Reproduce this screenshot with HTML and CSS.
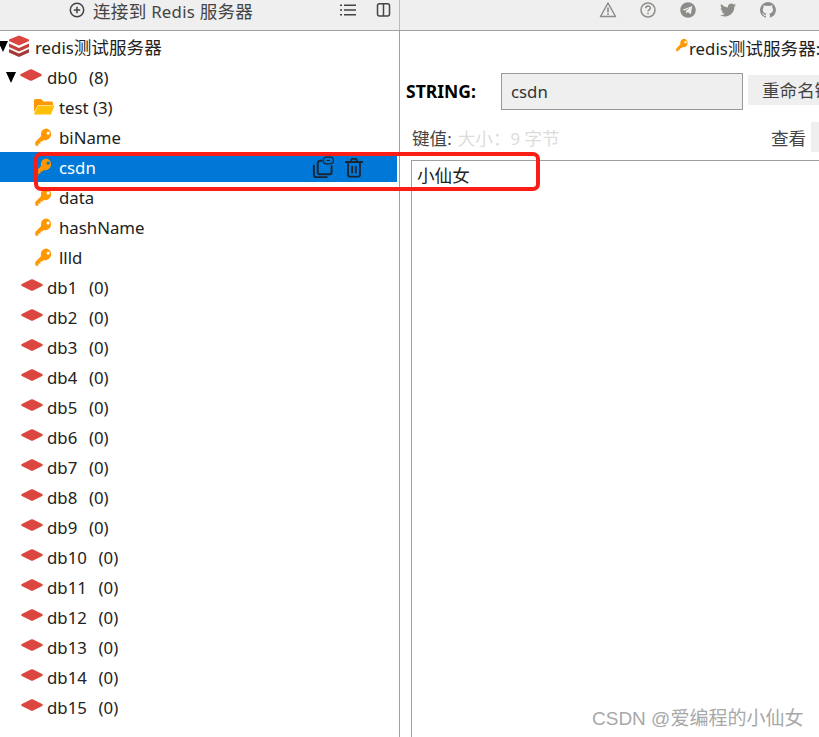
FILE: index.html
```html
<!DOCTYPE html>
<html lang="zh">
<head>
<meta charset="utf-8">
<title>Redis</title>
<link rel="stylesheet" href="styles.css">
</head>
<body>
<svg class="defs" width="0" height="0">
  <defs>
    <symbol id="key" viewBox="0 0 20 20">
      <path fill="#ff9800" d="M13 .5a6.500 6.500 0 0 0-6.200 8.500L.6 15.200a1 1 0 0 0-.3.700v2.800a1 1 0 0 0 1 1h2.400v-2.400h2.400v-2.400h2l1.600-1.600A6.500 6.500 0 1 0 13 .5zm1.600 3.300a1.800 1.800 0 1 1 0 3.600 1.800 1.800 0 0 1 0-3.600z"/>
    </symbol>
    <symbol id="db" viewBox="0 0 22 12">
      <path fill="#dc4640" d="M9.800.5a3 3 0 0 1 2.400 0l9 4.500q1.200.9 0 1.900l-9 4.600a3 3 0 0 1-2.400 0L.8 6.900q-1.200-1 0-1.900z"/>
    </symbol>
  </defs>
</svg>
<div class="app">
  <header class="topbar">
    <div class="top-left">
      <button class="connect">
        <svg class="ico16" viewBox="0 0 16 16"><circle cx="8" cy="8" r="6.700" fill="none" stroke="#444" stroke-width="1.500"/><path d="M8 4.800v6.400M4.800 8h6.400" stroke="#444" stroke-width="1.500"/></svg>
        <span><span class="zh">连接到</span> Redis <span class="zh">服务器</span></span>
      </button>
      <span class="top-tool list-tool">
        <svg class="ico16" viewBox="0 0 16 16"><path d="M0 3.200h2M0 8h2M0 12.800h2M4 3.200h12M4 8h12M4 12.800h12" stroke="#444" stroke-width="1.500"/></svg>
      </span>
      <span class="top-tool">
        <svg class="ico16" viewBox="0 0 16 16"><rect x="1.500" y="1.700" width="12" height="12.300" rx="2" fill="none" stroke="#444" stroke-width="1.500"/><path d="M7.500 2v12" stroke="#444" stroke-width="1.500"/></svg>
      </span>
    </div>
    <div class="top-right">
      <svg class="ico-top" viewBox="0 0 18 18"><path d="M9 2 1.500 15.500h15z" fill="none" stroke="#8c8c88" stroke-width="1.500" stroke-linejoin="round"/><path d="M9 6.500v5M9 12.500v1.500" stroke="#8c8c88" stroke-width="1.700"/></svg>
      <svg class="ico-top" viewBox="0 0 18 18"><circle cx="9" cy="9" r="7" fill="none" stroke="#8c8c88" stroke-width="1.500"/><path d="M6.800 7.300c0-3 4.500-3 4.500-.2 0 1.700-2.300 1.700-2.300 3.400M9 11.700v1.500" fill="none" stroke="#8c8c88" stroke-width="1.500"/></svg>
      <svg class="ico-top" viewBox="0 0 18 18"><circle cx="9" cy="9" r="7.800" fill="#8c8c88"/><path d="M3.500 8.800 13.300 5l-1.500 8.300-3-2.200-1.500 1.500-.4-2.700 4.300-3.600-5.300 3.200z" fill="#efefef"/></svg>
      <svg class="ico-top" viewBox="0 0 18 18"><path fill="#8c8c88" d="M17 4c-.6.300-1.200.4-1.900.5.700-.4 1.200-1 1.400-1.800-.6.400-1.300.6-2 .8a3.300 3.300 0 0 0-5.600 3C6.200 6.400 3.800 5.100 2.200 3.100c-.9 1.500-.4 3.400 1 4.400-.5 0-1-.2-1.500-.4 0 1.600 1.100 3 2.600 3.300-.5.100-1 .1-1.500 0 .4 1.300 1.600 2.200 3.100 2.300A6.600 6.600 0 0 1 1 14c1.500.9 3.200 1.500 5 1.500 6.100 0 9.500-5.100 9.300-9.700.7-.4 1.200-1.100 1.700-1.800z"/></svg>
      <svg class="ico-top" viewBox="0 0 18 18"><path fill="#8c8c88" d="M9 1a8 8 0 0 0-2.500 15.600c.4.100.5-.2.500-.4v-1.400c-2.200.5-2.700-1-2.700-1-.4-.9-.9-1.200-.9-1.200-.7-.5.100-.5.100-.5.800.1 1.200.8 1.200.8.700 1.200 1.900.9 2.300.7.100-.5.300-.9.500-1.100-1.800-.2-3.700-.9-3.700-4 0-.9.300-1.600.8-2.100-.1-.2-.4-1 .1-2.100 0 0 .7-.2 2.200.8a7.600 7.600 0 0 1 4 0c1.500-1 2.200-.8 2.200-.8.500 1.100.2 1.900.1 2.100.5.500.8 1.200.8 2.100 0 3.100-1.900 3.800-3.700 4 .3.200.6.700.6 1.500v2.200c0 .2.100.5.500.4A8 8 0 0 0 9 1z"/></svg>
    </div>
  </header>
  <main class="panes">
    <nav class="tree">
      <div class="row server">
        <span class="tri"></span>
        <svg class="stack" viewBox="0 0 22 22"><path fill="#dc4640" d="M11 .5 21 4.500v1.500L11 10.500 1 6V4.500z"/><path fill="#c43f3a" d="M1 8.500 11 13 21 8.500V12L11 16.500 1 12z"/><path fill="#a33a36" d="M1 14 11 18.500 21 14v3.500L11 22 1 17.500z"/></svg>
        <span>redis<span class="zh">测试服务器</span></span>
      </div>
      <div class="row db open"><span class="tri"></span><svg class="db-ico"><use href="#db"/></svg><span class="lbl">db0&nbsp; (8)</span></div>
      <div class="row item"><svg class="folder" viewBox="0 0 22 18"><path fill="#ff9800" d="M1 2.500A1.500 1.500 0 0 1 2.500 1h5.500l2.500 2.500h8A1.500 1.500 0 0 1 20 5v2H5L1 14z"/><path fill="#ffc107" d="M5 7.500h16.500L18 16.500H.8z"/></svg><span>test (3)</span></div>
      <div class="row item"><svg class="key"><use href="#key"/></svg><span>biName</span></div>
      <div class="row item selected">
        <svg class="key"><use href="#key"/></svg><span>csdn</span>
        <span class="row-actions">
          <svg class="act copy" viewBox="0 0 24 24"><path d="M16.500 22H5.500A2.500 2.500 0 0 1 3 19.500V10" fill="none" stroke="#1c2430" stroke-width="2" stroke-linecap="round"/><path d="M7 17V7.500A2.500 2.500 0 0 1 9.500 5H11M21.500 10.500V17a2 2 0 0 1-2 2H9a2 2 0 0 1-2-2" fill="none" stroke="#1c2430" stroke-width="2" stroke-linecap="round"/><rect x="12.700" y="1.200" width="10.800" height="7" rx="3.500" fill="none" stroke="#1c2430" stroke-width="1.400"/><path d="M16.200 4.700h3.800" stroke="#1c2430" stroke-width="1.200"/></svg>
          <svg class="act trash" viewBox="0 0 24 24"><path d="M3 6h18M9 5.500V3.500a1 1 0 0 1 1-1h4a1 1 0 0 1 1 1v2M5.500 6.500V20a2 2 0 0 0 2 2h9a2 2 0 0 0 2-2V6.500M10 11v6.500M14 11v6.500" fill="none" stroke="#1c2430" stroke-width="2" stroke-linecap="round"/></svg>
        </span>
      </div>
      <div class="row item"><svg class="key"><use href="#key"/></svg><span>data</span></div>
      <div class="row item"><svg class="key"><use href="#key"/></svg><span>hashName</span></div>
      <div class="row item"><svg class="key"><use href="#key"/></svg><span>llld</span></div>
      <div class="row db"><svg class="db-ico"><use href="#db"/></svg><span class="lbl">db1&nbsp; (0)</span></div>
      <div class="row db"><svg class="db-ico"><use href="#db"/></svg><span class="lbl">db2&nbsp; (0)</span></div>
      <div class="row db"><svg class="db-ico"><use href="#db"/></svg><span class="lbl">db3&nbsp; (0)</span></div>
      <div class="row db"><svg class="db-ico"><use href="#db"/></svg><span class="lbl">db4&nbsp; (0)</span></div>
      <div class="row db"><svg class="db-ico"><use href="#db"/></svg><span class="lbl">db5&nbsp; (0)</span></div>
      <div class="row db"><svg class="db-ico"><use href="#db"/></svg><span class="lbl">db6&nbsp; (0)</span></div>
      <div class="row db"><svg class="db-ico"><use href="#db"/></svg><span class="lbl">db7&nbsp; (0)</span></div>
      <div class="row db"><svg class="db-ico"><use href="#db"/></svg><span class="lbl">db8&nbsp; (0)</span></div>
      <div class="row db"><svg class="db-ico"><use href="#db"/></svg><span class="lbl">db9&nbsp; (0)</span></div>
      <div class="row db"><svg class="db-ico"><use href="#db"/></svg><span class="lbl">db10&nbsp; (0)</span></div>
      <div class="row db"><svg class="db-ico"><use href="#db"/></svg><span class="lbl">db11&nbsp; (0)</span></div>
      <div class="row db"><svg class="db-ico"><use href="#db"/></svg><span class="lbl">db12&nbsp; (0)</span></div>
      <div class="row db"><svg class="db-ico"><use href="#db"/></svg><span class="lbl">db13&nbsp; (0)</span></div>
      <div class="row db"><svg class="db-ico"><use href="#db"/></svg><span class="lbl">db14&nbsp; (0)</span></div>
      <div class="row db"><svg class="db-ico"><use href="#db"/></svg><span class="lbl">db15&nbsp; (0)</span></div>
    </nav>
    <section class="detail">
      <div class="key-title"><svg class="key-small"><use href="#key"/></svg><span>redis<span class="zh">测试服务器</span>:</span></div>
      <div class="key-bar">
        <strong class="type">STRING:</strong>
        <div class="name-input">csdn</div>
        <div class="btn zh">重命名键</div>
      </div>
      <div class="value-bar">
        <span class="value-label"><span class="zh">键值</span>:</span>
        <span class="size"><span class="zh">大小：</span>9 <span class="zh">字节</span></span>
        <span class="view zh">查看</span>
        <span class="view-select"></span>
      </div>
      <div class="value-box zh">小仙女</div>
    </section>
  </main>
  <div class="annotation"></div>
  <div class="watermark">CSDN @爱编程的小仙女</div>
</div>
</body>
</html>
```
FILE: styles.css
```css
html, body { margin: 0; padding: 0; height: 100%; overflow: hidden; background: #fff; }
body { font-family: "Noto Sans", "Noto Sans CJK SC", sans-serif; font-size: 16.800px; color: #222; }
.zh { font-size: 17.600px; }
.defs { position: absolute; }
.app { position: relative; width: 819px; height: 737px; overflow: hidden; display: flex; flex-direction: column; }

.topbar { height: 30px; flex: none; display: flex; background: #efefef; border-bottom: 1px solid #a0a0a0; }
.top-left { width: 399px; flex: none; display: flex; align-items: center; height: 20px; box-sizing: border-box; padding-right: 7px; }
.connect { all: unset; display: flex; align-items: center; gap: 8px; margin-left: 69px; font-size: 16.800px; letter-spacing: .25px; color: #444; white-space: nowrap; }
.ico16 { width: 16px; height: 16px; display: block; }
.top-tool { margin-left: 20px; display: block; }
.list-tool { margin-left: auto; }
.top-right { flex: 1; display: flex; align-items: flex-start; gap: 22px; padding: 1px 0 0 199px; border-left: 1px solid #bbb; }
.ico-top { width: 18px; height: 18px; flex: none; display: block; }

.panes { flex: 1; display: flex; min-height: 0; }
.tree { width: 400px; flex: none; box-sizing: border-box; padding-top: 1px; border-right: 1px solid #a0a0a0; }
.row { height: 30px; box-sizing: border-box; display: flex; align-items: center; white-space: nowrap; color: #222; position: relative; }
.tri { width: 0; height: 0; border-left: 5.500px solid transparent; border-right: 5.500px solid transparent; border-top: 11px solid #000; flex: none; }
.server { padding-bottom: 2px; }
.server .tri { margin-left: -2px; }
.stack { width: 22px; height: 22px; margin: 0 5px 0 0; flex: none; }
.db { padding-left: 21px; }
.db.open { padding-left: 6px; }
.db.open .tri { margin-right: 4px; }
.db-ico { width: 22px; height: 12px; flex: none; margin-top: -4px; }
.db .lbl { margin-left: 4px; word-spacing: 1.500px; }
.db.open .lbl { margin-left: 5px; }
.item { padding-left: 33px; }
.folder { width: 22px; height: 18px; margin-right: 4px; flex: none; }
.key { width: 18px; height: 18px; margin: -1px 6px 0 2px; flex: none; }
.selected { background: #0078d7; color: #fff; margin-right: 2px; }
.row-actions { position: absolute; left: 311px; top: 4px; display: flex; gap: 9px; }
.act { width: 23px; height: 23px; display: block; }
.trash { width: 22px; }

.detail { flex: 1; min-width: 0; overflow: hidden; }
.key-title { height: 30px; box-sizing: border-box; display: flex; align-items: center; padding: 2px 0 0 276px; white-space: nowrap; color: #222; }
.key-small { width: 13px; height: 14px; flex: none; margin: -4px 0 0 0; }
.key-bar { display: flex; align-items: center; height: 38px; margin-top: 11px; padding-left: 6px; white-space: nowrap; }
.type { width: 95px; flex: none; color: #000; font-weight: 700; font-size: 17.500px; }
.name-input { width: 240px; height: 35px; flex: none; background: #efefef; border: 1px solid #999; line-height: 35px; text-indent: 9px; color: #333; }
.btn { margin-left: 5px; width: 120px; height: 30px; flex: none; background: #efefef; line-height: 30px; text-indent: 14px; color: #444; margin-top: -3px; }
.value-bar { display: flex; align-items: center; height: 30px; margin-top: 12px; padding-left: 12px; white-space: nowrap; position: relative; }
.value-label { color: #444; }
.size { color: #dcdcdc; margin-left: 6px; }
.view { position: absolute; left: 371px; color: #444; }
.view-select { position: absolute; left: 411px; top: 0; width: 40px; height: 30px; background: #efefef; }
.value-box { margin: 8px 0 0 11px; height: 600px; border-top: 1px solid #a0a0a0; border-left: 1px solid #a0a0a0; padding: 0 5px; color: #222; width: 900px; line-height: 28px; }

.annotation { position: absolute; left: 34px; top: 152px; width: 498px; height: 31px; border: 4px solid #fb1e16; border-radius: 7px; pointer-events: none; }
.watermark { position: absolute; left: 592px; top: 703px; font-family: "Liberation Sans", "Noto Sans CJK SC", sans-serif; font-size: 19px; color: #a8a8a8; white-space: nowrap; }
```
